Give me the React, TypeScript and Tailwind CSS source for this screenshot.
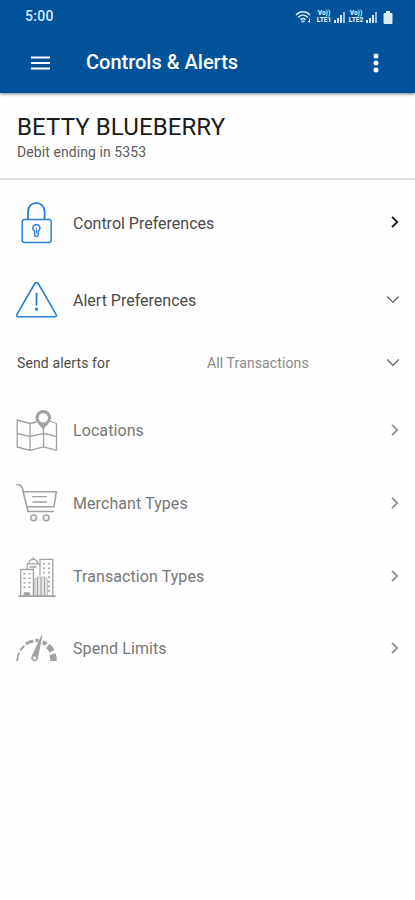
import type { ReactNode } from 'react';

type IconProps = { children: ReactNode; className?: string };

function RowIcon({ children, className = 'text-[#a2a2a2]' }: IconProps) {
  return (
    <svg width="42" height="44" viewBox="0 0 42 44" fill="none" stroke="currentColor" strokeWidth="1.3" strokeLinecap="round" strokeLinejoin="round" className={`shrink-0 ${className}`}>
      {children}
    </svg>
  );
}

function LockIcon() {
  return (
    <RowIcon className="text-[#2a7fd0]">
      <rect x="6.2" y="18.5" width="29" height="23" rx="2.2" strokeWidth="1.5" />
      <path d="M12 18V10.2a8.3 8.3 0 0 1 16.6 0V18" strokeWidth="1.8" />
      <path d="M18.6 30.2a3.6 3.6 0 1 1 3.6 0v3.5a1.8 1.8 0 0 1-3.6 0Z" strokeWidth="1.4" />
      <path d="M20.4 27v5" strokeWidth="1" />
    </RowIcon>
  );
}

function AlertIcon() {
  return (
    <RowIcon className="text-[#2a7fd0]">
      <path d="M18.8 5.5a2 2 0 0 1 3.4 0L40.2 36.6a1.4 1.4 0 0 1-1.2 2.2H2a1.4 1.4 0 0 1-1.2-2.2Z" strokeWidth="1.6" />
      <path d="M20.5 15.5v11.5" strokeWidth="1.8" />
      <circle cx="20.5" cy="31.2" r="1.6" fill="currentColor" stroke="none" />
    </RowIcon>
  );
}

function MapIcon() {
  return (
    <RowIcon>
      <path d="M20 13 14 14.5 1.2 11v27L14 41.3l13.5-3.5 13 3.5V14.5l-6-2M14 14.5v26.5M27.5 20v17.8M1.2 24.5l12.8 2.8 13.5-2.8 13 2.8" />
      <path fillRule="evenodd" d="M27.3 1a7.8 7.8 0 0 0-7.8 7.8c0 4.8 5.2 7.5 7.8 12.4 2.6-4.9 7.8-7.6 7.8-12.4A7.8 7.8 0 0 0 27.3 1Zm0 3.2a4.7 4.7 0 1 1 0 9.4 4.7 4.7 0 0 1 0-9.4Z" fill="currentColor" stroke="none" />
    </RowIcon>
  );
}

function CartIcon() {
  return (
    <RowIcon>
      <path d="M1 2.5c3 0 4.5.6 5.3 3.5L12 29.5H37.2" strokeWidth="1.6" />
      <path d="M7.5 9.7H40.4L38 24.7H11" strokeWidth="1.5" />
      <path d="M16.5 14.7h14M17 20h13.5" />
      <circle cx="17.6" cy="35.8" r="2.9" strokeWidth="1.5" />
      <circle cx="30.2" cy="35.8" r="2.9" strokeWidth="1.5" />
    </RowIcon>
  );
}

function BuildingsIcon() {
  return (
    <RowIcon>
      <path d="M3 41.2h36" strokeWidth="1.8" />
      <path d="M4.7 41V14.5H17.4V41M24 20V4.3H36.8V41M11.2 14V8.8H23.5M13.2 8.6V6.2L16 4.4h3l2.4 1.8v2.4M17.4 4V2.5M14 12h6" />
      <path d="M18.8 40.5V24l3-2h7.5l2 2v16.5Z" fill="currentColor" fillOpacity="0.25" strokeWidth="0.7" />
      <path d="M21.5 23v17M25 23v17M28.5 23v17" strokeWidth="1.1" />
      <path d="M7.5 18.8h7M7.5 23.3h7M7.5 27.8h7M7.5 32.3h7" strokeWidth="1.6" strokeLinecap="butt" strokeDasharray="2 3" />
      <path d="M27 8.8h7M27 13.3h7M27 17.8h7M32 22.3h2M32 26.8h2M32 31.3h2M32 35.8h2" strokeWidth="1.6" strokeLinecap="butt" strokeDasharray="2 3" />
      <path d="M8.2 40.5v-2.7h5v2.7Z" fill="currentColor" />
    </RowIcon>
  );
}

function GaugeIcon() {
  return (
    <RowIcon>
      <g strokeLinecap="butt">
        <path d="M1.2 34c0-3 .7-5.8 2-8.2" strokeWidth="1.8" />
        <path d="M4.3 23.5c1.1-1.8 2.4-3.2 4-4.5" strokeWidth="2.2" />
        <path d="M10 17c2.2-1.7 4.7-2.6 7.3-3" strokeWidth="3" />
        <path d="M19.5 13.5c1-.1 2 0 3 .1" strokeWidth="3.5" />
        <path d="M26.7 15.2c1.4.5 2.6 1.2 3.7 2" strokeWidth="4" />
        <path d="M31.8 18.8c2 1.7 3.3 3.5 4.2 5.4" strokeWidth="5.5" />
        <path d="M36.6 27.2c.7 2.3 1 4.5 1 6.8" strokeWidth="6.5" />
      </g>
      <path d="M25.7 9 16.2 29.5a2.8 2.8 0 1 0 5.2 1.3Z" fill="currentColor" strokeWidth="1.2" />
      <circle cx="18.6" cy="30.9" r="1.6" fill="white" stroke="none" />
    </RowIcon>
  );
}

function Chevron({ down = false, className }: { down?: boolean; className: string }) {
  return down ? (
    <svg width="14" height="10" viewBox="0 0 14 10" fill="none" stroke="currentColor" strokeWidth="1.5" className={`ml-auto mr-[15px] ${className}`}>
      <path d="m1.2 1.5 5.8 5.8 5.8-5.8" />
    </svg>
  ) : (
    <svg width="10" height="14" viewBox="0 0 10 14" fill="none" stroke="currentColor" strokeWidth="1.8" className={`mb-[2px] ml-auto mr-[15px] ${className}`}>
      <path d="m2 1.8 5.3 5.2L2 12.2" />
    </svg>
  );
}

const options = [
  { name: 'Locations', icon: <MapIcon />, height: 'h-[78px]' },
  { name: 'Merchant Types', icon: <CartIcon />, height: 'h-[68px]' },
  { name: 'Transaction Types', icon: <BuildingsIcon />, height: 'h-[77px]' },
  { name: 'Spend Limits', icon: <GaugeIcon />, height: 'h-[68px]' },
];

function Signal() {
  return (
    <svg width="12" height="12" viewBox="0 0 12 12" fill="currentColor">
      <path d="M0 9h2v3H0zM3 7h2v5H3zM6 4h2v8H6z" />
      <path d="M9 1h2v11H9z" opacity="0.7" />
    </svg>
  );
}

function VoLte({ sim }: { sim: number }) {
  return (
    <span className="flex w-[16px] flex-col items-center text-[6.5px] font-black leading-[7.5px]">
      <span>Vo))</span>
      <span>{`LTE${sim}`}</span>
    </span>
  );
}

function StatusBar() {
  return (
    <div className="flex h-8 items-center justify-between pl-[25px] pr-[22px] text-[#d9ebfb]">
      <span className="text-[14px] font-medium tracking-[0.3px]">5:00</span>
      <div className="flex items-center pt-[2px]">
        <svg width="17" height="14" viewBox="0 0 17 14" fill="none" stroke="currentColor" strokeWidth="1.5" className="mr-[4px]">
          <path d="M1 5c4-4.3 10-4.3 14 0M3.3 7.4c2.8-2.8 6.6-2.8 9.4 0M5.6 9.7c1.5-1.4 3.3-1.4 4.8 0" />
          <path d="m6.5 11 1.5 1.5L9.5 11ZM14.5 8.5v4M13 11l1.5 1.5" strokeWidth="1" />
        </svg>
        <div className="flex items-center gap-[2px]">
          <VoLte sim={1} />
          <Signal />
          <VoLte sim={2} />
          <Signal />
        </div>
        <svg width="10" height="13" viewBox="0 0 10 13" fill="currentColor" className="ml-[5px]">
          <path d="M3 0h4v2h1.5a1 1 0 0 1 1 1v9a1 1 0 0 1-1 1h-7a1 1 0 0 1-1-1V3a1 1 0 0 1 1-1H3Z" />
        </svg>
      </div>
    </div>
  );
}

export default function App() {
  return (
    <div className="flex h-[900px] w-full flex-col overflow-hidden bg-[#fefefe] font-['Roboto',sans-serif]">
      <header className="relative h-[93px] shrink-0 bg-[#015298] shadow-[0_1px_3px_rgba(0,0,0,0.5)]">
        <StatusBar />
        <div className="flex h-[61px] items-center pl-[31px] pr-[36px] text-white">
          <svg width="19" height="14" viewBox="0 0 19 14" fill="none" stroke="currentColor" strokeWidth="1.8">
            <path d="M0 1.5h19M0 7h19M0 12.5h19" />
          </svg>
          <h1 className="mb-[2px] ml-[36px] text-[20px] font-medium">Controls &amp; Alerts</h1>
          <svg width="6" height="20" viewBox="0 0 6 20" fill="currentColor" className="ml-auto">
            <circle cx="3" cy="3" r="2.5" />
            <circle cx="3" cy="10" r="2.5" />
            <circle cx="3" cy="17" r="2.5" />
          </svg>
        </div>
      </header>

      <section className="h-[87px] shrink-0 border-b-2 border-[#dedede] pl-[16px] pt-[20px]">
        <h2 className="pl-px text-[24px] leading-[28px] tracking-[0.1px] text-[#1c1c1c]">BETTY BLUEBERRY</h2>
        <p className="pl-px text-[14px] leading-[23px] tracking-[0.08px] text-[#5c5c5c]">Debit ending in 5353</p>
      </section>

      <div className="flex h-[86px] shrink-0 items-center pl-4">
        <LockIcon />
        <span className="ml-[15px] pt-px text-[16px] text-[#4a4a4a]">Control Preferences</span>
        <Chevron className="text-[#151515]" />
      </div>
      <div className="flex h-[68px] shrink-0 items-center pl-4">
        <AlertIcon />
        <span className="ml-[15px] pt-[2px] text-[16px] text-[#4a4a4a]">Alert Preferences</span>
        <Chevron down className="text-[#707070]" />
      </div>
      <div className="flex h-[58px] shrink-0 items-center pl-4 text-[14px]">
        <span className="w-[191px] pl-px tracking-[0.12px] text-[#4a4a4a]">Send alerts for</span>
        <span className="tracking-[0.12px] text-[#8a8a8a]">All Transactions</span>
        <Chevron down className="text-[#707070]" />
      </div>

      {options.map((option) => (
        <div key={option.name} className={`flex shrink-0 items-center pl-4 ${option.height}`}>
          {option.icon}
          <span className="ml-[15px] text-[16px] tracking-[0.08px] text-[#777777]">{option.name}</span>
          <Chevron className="text-[#929292]" />
        </div>
      ))}
    </div>
  );
}
